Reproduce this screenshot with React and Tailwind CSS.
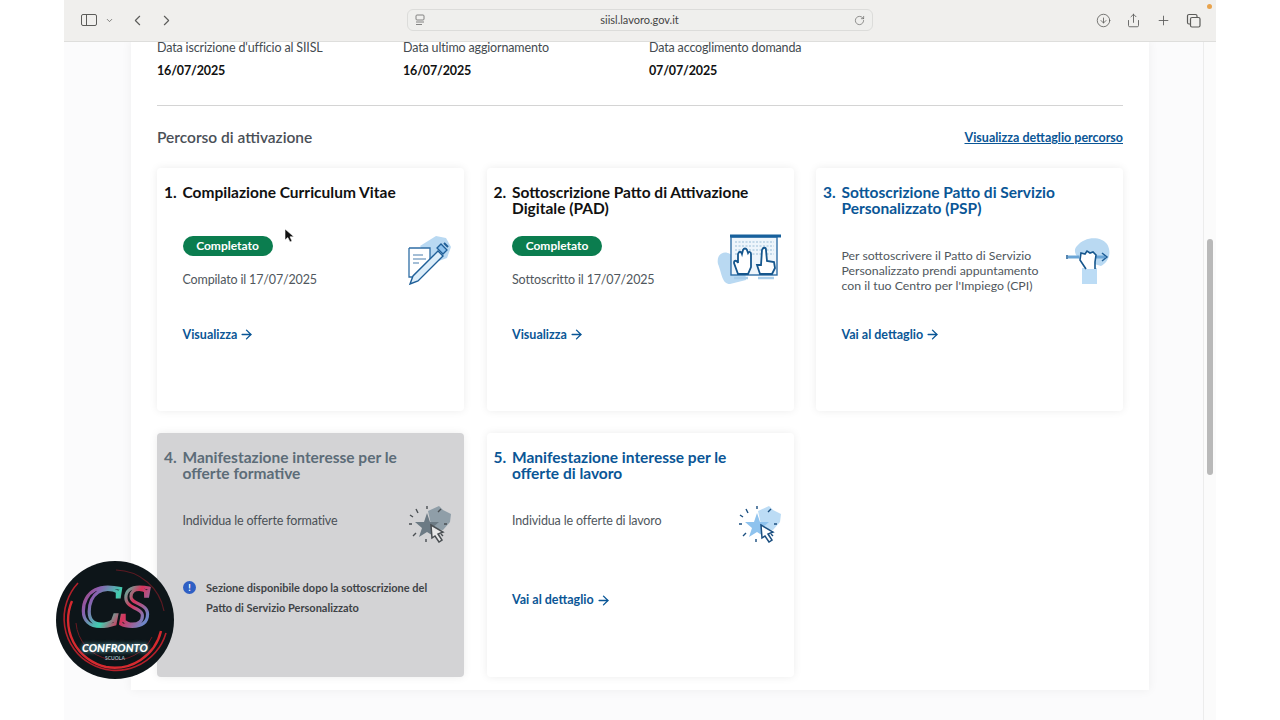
import React from 'react';
import { ChevronLeft, ChevronRight, ChevronDown, RotateCw, Plus, Share, ArrowRight, CircleArrowDown } from 'lucide-react';

const font = { fontFamily: 'Lato, "Noto Sans", sans-serif' };

const PenIcon = () => (
    <svg width="46" height="52" viewBox="0 0 46 52" fill="none" className="-mt-0.5">
        <path d="M14 12 L30 2 L40 4 L45 13 L41 24 L30 28 L22 24 Z" fill="#b9d9f2" />
        <path d="M3 14 H24 V32 M3 14 V43 H9" stroke="#2f6ea5" strokeWidth="1.3" fill="#fff" />
        <path d="M7 21 H17 M7 25 H20 M7 29 H13" stroke="#4a7fae" strokeWidth="1.1" />
        <path d="M4 50 L7 42 L32 17 L37 22 L12 47 Z" fill="#dcedf9" stroke="#1f5f98" strokeWidth="1.4" />
        <path d="M31 14 L35 10 L41 16 L37 20 Z" fill="#8fc3ee" stroke="#1f5f98" strokeWidth="1.3" />
        <path d="M38 9 L42 13" stroke="#1f5f98" strokeWidth="2" />
    </svg>
);

const HandsIcon = () => (
    <svg width="66" height="52" viewBox="0 0 66 52" fill="none" className="-mt-0.5">
        <path d="M2 30 C0 20 8 16 14 20 L28 26 L30 46 L14 50 C6 50 6 40 2 30 Z" fill="#b9d9f2" />
        <rect x="15" y="3" width="46" height="38" fill="#eef5fb" stroke="#2f6ea5" strokeWidth="1.4" />
        <path d="M19 8 H58 M19 12 H58 M19 16 H58 M19 20 H58" stroke="#b6cfe4" strokeWidth="1.5" strokeDasharray="2 1.5" />
        <path d="M14 2 H65" stroke="#16609c" strokeWidth="3" />
        <path d="M22 40 L18 29 C18 26 21 26 22 29 L22 20 C23 17 25 17 26 20 L27 16 C28 14 30 14 31 16 L32 19 C33 17 35 18 35 20 L35 33 L32 40 Z" fill="#fff" stroke="#15568d" strokeWidth="1.8" />
        <path d="M44 40 L41 31 L45 31 L46 16 C47 13 50 13 50 16 L51 27 L58 28 L59 34 L56 40 Z" fill="#fff" stroke="#15568d" strokeWidth="1.8" />
        <path d="M18 44 H32 M42 44 H58" stroke="#a8cdea" strokeWidth="2.5" />
    </svg>
);

const PointIcon = () => (
    <svg width="46" height="48" viewBox="0 0 46 48" fill="none" className="-mt-2.5">
        <path d="M12 8 C20 -2 36 -2 42 6 C47 14 44 24 36 28 L16 22 C10 18 8 12 12 8 Z" fill="#b9d9f2" />
        <rect x="17" y="30" width="15" height="16" fill="#bcdcf5" />
        <path d="M3 19 H14 M30 19 H40" stroke="#6aa5d6" strokeWidth="3" />
        <path d="M2 17 V21 M37 15 L42 19 L37 23" stroke="#1f5f98" strokeWidth="1.5" />
        <path d="M21 31 L15 22 L16 15 L20 16 L22 13 L25 15 L28 14 L31 17 L30 24 L30 31" fill="#fff" stroke="#15568d" strokeWidth="1.6" />
    </svg>
);

const StarIcon = ({ star, back, ink, cursor }) => (
    <svg width="44" height="38" viewBox="0 0 44 38" fill="none">
        <path d="M20 6 L31 1 L35 5 L43 9 L42 17 L35 25 L24 24 Z" fill={back} />
        <path d="M19 8 L22 17 L31 17 L24 23 L27 32 L19 27 L11 32 L14 23 L7 17 L16 17 Z" fill={star} />
        <path d="M8 4 L10 8 M19 1 V4 M30 7 L33 4 M1 19 H4 M36 19 H39 M5 31 L8 28 M18 34 V37 M33 29 L35 31 M2 10 L5 12" stroke={ink} strokeWidth="1.4" />
        <path d="M23 20 L35 27 L30 29 L34 35 L31 37 L27 31 L24 33 Z" fill={cursor} stroke={ink} strokeWidth="1.5" />
    </svg>
);

const Title = ({ n, children, color }) => (
    <div className={`flex font-bold text-[15.5px] leading-4 ${color}`}>
        <span className="w-[18.5px] shrink-0">{n}.</span>
        <span className="max-w-[258px]">{children}</span>
    </div>
);

const Pill = () => (
    <span className="flex items-center justify-center w-[90px] h-5 rounded-full bg-[#0b7d4f] text-white text-xs font-bold">Completato</span>
);

const Link = ({ children, className }) => (
    <a className={`flex items-center gap-0.5 font-bold text-[12.5px] leading-4 text-[#0a5696] ${className}`}>
        {children}
        <ArrowRight size={15} strokeWidth={2.2} />
    </a>
);

const Card = ({ children }) => (
    <div className="h-[243.5px] bg-white rounded-sm shadow-[0_0_8px_rgba(0,0,0,0.08)] pt-4 pl-[7px] pr-3">{children}</div>
);

export default function App() {
    return (
        <div className="relative w-[1280px] h-[720px] overflow-hidden bg-white text-[#111]" style={font}>
            <div className="ml-16 w-[1152px] h-full flex flex-col">
                <div className="relative z-10 h-[41.5px] shrink-0 flex items-center bg-[#f0efed] border-b border-[#dededc] text-[#5c5c5a]">
                    <div className="ml-[17px] w-4 h-3 border border-[#5c5c5a] rounded-[2px] flex">
                        <span className="w-[5px] border-r border-[#5c5c5a]" />
                    </div>
                    <ChevronDown size={9} strokeWidth={2} className="ml-2" />
                    <ChevronLeft size={17} strokeWidth={1.6} className="ml-[15px]" />
                    <ChevronRight size={17} strokeWidth={1.6} className="ml-3" />
                    <div className="ml-[232px] w-[466px] h-[22px] flex items-center px-[7px] rounded-md border border-[#dcdcda] bg-[#efefed]">
                        <svg width="10" height="12" viewBox="0 0 10 12" fill="none" stroke="#777" strokeWidth="0.9">
                            <rect x="1" y="1" width="8" height="5" rx="1" />
                            <path d="M1 8 H9 M1 10.5 H7" />
                        </svg>
                        <span className="flex-1 text-center text-[11px] text-[#444]">siisl.lavoro.gov.it</span>
                        <RotateCw size={11} strokeWidth={1.4} />
                    </div>
                    <CircleArrowDown size={15} strokeWidth={1.3} className="ml-[223px]" />
                    <Share size={15} strokeWidth={1.4} className="ml-[15px]" />
                    <Plus size={15} strokeWidth={1.4} className="ml-[15px]" />
                    <svg width="15" height="15" viewBox="0 0 15 15" fill="none" stroke="#5c5c5a" strokeWidth="1.2" className="ml-[15px]">
                        <rect x="4.5" y="4.5" width="9.5" height="9.5" rx="1.5" />
                        <path d="M4.5 11 H3 A1.5 1.5 0 0 1 1.5 9.5 V3 A1.5 1.5 0 0 1 3 1.5 H9.5 A1.5 1.5 0 0 1 11 3 V4.5" />
                    </svg>
                </div>
                <div className="flex flex-1 min-h-0 bg-[#fbfbfc]">
                    <div className="w-[1139px]">
                        <div className="ml-[67px] -mt-px w-[1018px] h-[649px] bg-white shadow-[0_0_10px_rgba(0,0,0,0.06)] px-[26px]">
                            <div className="flex pb-[27px] border-b border-[#d4d4d4] text-[12.5px] tracking-[-0.15px] leading-[14px]">
                                {[
                                    ["Data iscrizione d'ufficio al SIISL", '16/07/2025'],
                                    ['Data ultimo aggiornamento', '16/07/2025'],
                                    ['Data accoglimento domanda', '07/07/2025'],
                                ].map(([label, value]) => (
                                    <div key={label} className="w-[246px]">
                                        <div className="text-[#444b50]">{label}</div>
                                        <div className="mt-[9px] font-bold">{value}</div>
                                    </div>
                                ))}
                            </div>
                            <div className="flex items-center justify-between mt-[23px] h-[18px]">
                                <span className="text-[15.5px] font-semibold text-[#4a5057]">Percorso di attivazione</span>
                                <a className="mt-0.5 text-[12.5px] font-bold underline text-[#0a5696]">Visualizza dettaglio percorso</a>
                            </div>
                            <div className="grid grid-cols-3 gap-x-[22.5px] gap-y-[22px] mt-[21px]">
                                <Card>
                                    <Title n="1" color="text-[#111]">Compilazione Curriculum Vitae</Title>
                                    <div className="flex justify-between mt-9 pl-[18.5px]">
                                        <div>
                                            <Pill />
                                            <div className="mt-4 text-[12.5px] tracking-[-0.15px] leading-4 text-[#50575d]">Compilato il 17/07/2025</div>
                                            <Link className="mt-[39px]">Visualizza</Link>
                                        </div>
                                        <PenIcon />
                                    </div>
                                </Card>
                                <Card>
                                    <Title n="2" color="text-[#111]">Sottoscrizione Patto di Attivazione Digitale (PAD)</Title>
                                    <div className="flex justify-between mt-5 pl-[18.5px]">
                                        <div>
                                            <Pill />
                                            <div className="mt-4 text-[12.5px] tracking-[-0.15px] leading-4 text-[#50575d]">Sottoscritto il 17/07/2025</div>
                                            <Link className="mt-[39px]">Visualizza</Link>
                                        </div>
                                        <HandsIcon />
                                    </div>
                                </Card>
                                <Card>
                                    <Title n="3" color="text-[#0a5696]">Sottoscrizione Patto di Servizio Personalizzato (PSP)</Title>
                                    <div className="flex justify-between mt-8 pl-[18.5px]">
                                        <div>
                                            <div className="text-[12.3px] leading-[15px] text-[#50575d] w-[210px]">Per sottoscrivere il Patto di Servizio Personalizzato prendi appuntamento con il tuo Centro per l'Impiego (CPI)</div>
                                            <Link className="mt-[34px]">Vai al dettaglio</Link>
                                        </div>
                                        <PointIcon />
                                    </div>
                                </Card>
                                <div className="h-[243.5px] bg-[#d3d3d5] rounded-sm shadow-[0_0_8px_rgba(0,0,0,0.08)] pt-4 pl-[7px] pr-3">
                                    <Title n="4" color="text-[#5c6c78]">Manifestazione interesse per le offerte formative</Title>
                                    <div className="flex justify-between pl-[18.5px] mt-6">
                                        <div className="text-[12.5px] tracking-[-0.15px] leading-4 text-[#4a5056] mt-2">Individua le offerte formative</div>
                                        <StarIcon star="#6c7a84" back="#8f9ea8" ink="#4a4f53" cursor="#e8e8e8" />
                                    </div>
                                    <div className="flex mt-[35px] pl-[19px]">
                                        <span className="mt-[3px] w-[13px] h-[13px] shrink-0 rounded-full bg-[#2f5fc4] text-white text-[9px] leading-[13px] font-bold text-center">!</span>
                                        <div className="ml-2.5 text-[11px] leading-5 font-bold text-[#3f4347]">Sezione disponibile dopo la sottoscrizione del<br />Patto di Servizio Personalizzato</div>
                                    </div>
                                </div>
                                <Card>
                                    <Title n="5" color="text-[#0a5696]">Manifestazione interesse per le offerte di lavoro</Title>
                                    <div className="flex justify-between pl-[18.5px] mt-6">
                                        <div>
                                            <div className="text-[12.5px] tracking-[-0.15px] leading-4 text-[#50575d] mt-2">Individua le offerte di lavoro</div>
                                            <Link className="mt-[63px]">Vai al dettaglio</Link>
                                        </div>
                                        <StarIcon star="#8fc3ee" back="#bcdcf5" ink="#1b4f80" cursor="#fff" />
                                    </div>
                                </Card>
                            </div>
                        </div>
                    </div>
                    <div className="relative z-10 w-[13px] border-l border-[#ececec] bg-[#fbfbfb]">
                        <div className="absolute left-[3px] top-[197px] w-1.5 h-[236px] rounded-full bg-[#b9b9b9]" />
                    </div>
                </div>
            </div>

            <span className="absolute z-20 left-[1207px] top-1 w-[5px] h-[5px] rounded-full bg-[#e8a34d]" />

            <svg width="12" height="16" viewBox="0 0 12 16" className="absolute left-[284px] top-[228px]">
                <path d="M1 1 V12 L3.8 9.6 L6 14 L8 13 L6 8.8 H10 Z" fill="#111" stroke="#fff" strokeWidth="0.6" />
            </svg>

            <div className="absolute left-[56px] top-[561px] w-[118px] h-[118px] rounded-full overflow-hidden bg-[#0d1519]">
                <svg width="118" height="118" viewBox="0 0 118 118" fill="none" className="absolute inset-0">
                    <defs>
                        <linearGradient id="csGrad" x1="0" y1="0" x2="1" y2="0.6">
                            <stop offset="0" stopColor="#c92a4a" />
                            <stop offset="0.3" stopColor="#8a5fb0" />
                            <stop offset="0.55" stopColor="#3fd0b0" />
                            <stop offset="0.75" stopColor="#d8325a" />
                            <stop offset="1" stopColor="#6f86c8" />
                        </linearGradient>
                    </defs>
                    <path d="M22 22 A52 52 0 1 0 110 72" stroke="#b3202a" strokeWidth="1.6" />
                    <path d="M16 40 A48 48 0 0 0 50 106 A48 48 0 0 0 105 70" stroke="#d62a2f" strokeWidth="2.4" />
                    <path d="M60 9 A50 50 0 0 1 108 50" stroke="#5c1a22" strokeWidth="1.2" />
                    <path d="M20 62 A40 40 0 0 0 96 76" stroke="#6d1a22" strokeWidth="1" />
                    <text x="59" y="65" textAnchor="middle" fontSize="60" fontStyle="italic" fontFamily="Liberation Serif, serif" fill="none" stroke="url(#csGrad)" strokeWidth="3.2">CS</text>
                </svg>
                <div className="absolute left-0 right-0 top-[80px] text-center text-[11px] leading-[13px] italic font-black text-white [text-shadow:0_0_4px_#7fd8e8]">CONFRONTO</div>
                <div className="absolute left-0 right-0 top-[94px] text-center text-[5px] leading-[6px] font-bold text-[#8fb4bd]">SCUOLA</div>
            </div>
        </div>
    );
}
